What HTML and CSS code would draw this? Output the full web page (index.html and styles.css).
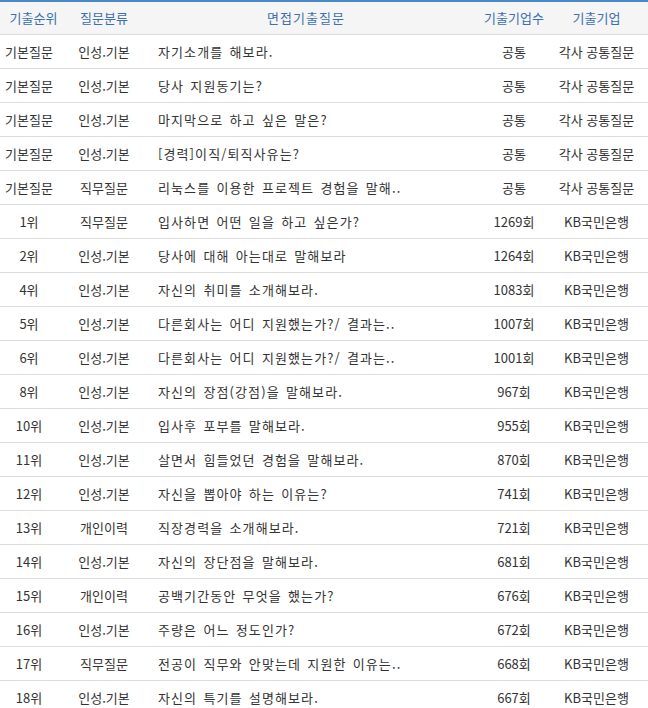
FILE: index.html
```html
<!DOCTYPE html>
<html lang="ko">
<head>
<meta charset="utf-8">
<link rel="stylesheet" href="styles.css">
</head>
<body>
<table class="qtable">
  <colgroup>
    <col class="c1"><col class="c2"><col class="c3"><col class="c4"><col class="c5">
  </colgroup>
  <thead>
    <tr><th>기출순위</th><th>질문분류</th><th class="qh">면접기출질문</th><th>기출기업수</th><th class="last">기출기업</th></tr>
  </thead>
  <tbody>
    <tr><td class="rank">기본질문</td><td>인성.기본</td><td class="q">자기소개를 해보라.</td><td>공통</td><td class="last">각사 공통질문</td></tr>
    <tr><td class="rank">기본질문</td><td>인성.기본</td><td class="q">당사 지원동기는?</td><td>공통</td><td class="last">각사 공통질문</td></tr>
    <tr><td class="rank">기본질문</td><td>인성.기본</td><td class="q">마지막으로 하고 싶은 말은?</td><td>공통</td><td class="last">각사 공통질문</td></tr>
    <tr><td class="rank">기본질문</td><td>인성.기본</td><td class="q">[경력]이직/퇴직사유는?</td><td>공통</td><td class="last">각사 공통질문</td></tr>
    <tr><td class="rank">기본질문</td><td>직무질문</td><td class="q">리눅스를 이용한 프로젝트 경험을 말해..</td><td>공통</td><td class="last">각사 공통질문</td></tr>
    <tr><td class="rank">1위</td><td>직무질문</td><td class="q">입사하면 어떤 일을 하고 싶은가?</td><td>1269회</td><td class="last">KB국민은행</td></tr>
    <tr><td class="rank">2위</td><td>인성.기본</td><td class="q">당사에 대해 아는대로 말해보라</td><td>1264회</td><td class="last">KB국민은행</td></tr>
    <tr><td class="rank">4위</td><td>인성.기본</td><td class="q">자신의 취미를 소개해보라.</td><td>1083회</td><td class="last">KB국민은행</td></tr>
    <tr><td class="rank">5위</td><td>인성.기본</td><td class="q">다른회사는 어디 지원했는가?/ 결과는..</td><td>1007회</td><td class="last">KB국민은행</td></tr>
    <tr><td class="rank">6위</td><td>인성.기본</td><td class="q">다른회사는 어디 지원했는가?/ 결과는..</td><td>1001회</td><td class="last">KB국민은행</td></tr>
    <tr><td class="rank">8위</td><td>인성.기본</td><td class="q">자신의 장점(강점)을 말해보라.</td><td>967회</td><td class="last">KB국민은행</td></tr>
    <tr><td class="rank">10위</td><td>인성.기본</td><td class="q">입사후 포부를 말해보라.</td><td>955회</td><td class="last">KB국민은행</td></tr>
    <tr><td class="rank">11위</td><td>인성.기본</td><td class="q">살면서 힘들었던 경험을 말해보라.</td><td>870회</td><td class="last">KB국민은행</td></tr>
    <tr><td class="rank">12위</td><td>인성.기본</td><td class="q">자신을 뽑아야 하는 이유는?</td><td>741회</td><td class="last">KB국민은행</td></tr>
    <tr><td class="rank">13위</td><td>개인이력</td><td class="q">직장경력을 소개해보라.</td><td>721회</td><td class="last">KB국민은행</td></tr>
    <tr><td class="rank">14위</td><td>인성.기본</td><td class="q">자신의 장단점을 말해보라.</td><td>681회</td><td class="last">KB국민은행</td></tr>
    <tr><td class="rank">15위</td><td>개인이력</td><td class="q">공백기간동안 무엇을 했는가?</td><td>676회</td><td class="last">KB국민은행</td></tr>
    <tr><td class="rank">16위</td><td>인성.기본</td><td class="q">주량은 어느 정도인가?</td><td>672회</td><td class="last">KB국민은행</td></tr>
    <tr><td class="rank">17위</td><td>직무질문</td><td class="q">전공이 직무와 안맞는데 지원한 이유는..</td><td>668회</td><td class="last">KB국민은행</td></tr>
    <tr><td class="rank">18위</td><td>인성.기본</td><td class="q">자신의 특기를 설명해보라.</td><td>667회</td><td class="last">KB국민은행</td></tr>
  </tbody>
</table>
</body>
</html>
```

FILE: styles.css
```css
html, body {
  margin: 0;
  padding: 0;
  background: #ffffff;
}
body {
  font-family: "Noto Sans CJK KR", "Noto Sans", sans-serif;
  font-size: 13px;
  color: #333333;
}
.qtable {
  width: 648px;
  border-collapse: collapse;
  table-layout: fixed;
  border-top: 2px solid #4a88c7;
}
.c1 { width: 67px; }
.c2 { width: 74px; }
.c3 { width: 330px; }
.c4 { width: 86px; }
.c5 { width: 91px; }
.qtable th {
  height: 32px;
  padding: 0;
  background: #f5f5f5;
  color: #3a70ad;
  font-weight: normal;
  text-align: center;
  border-bottom: 1px solid #dcdcdc;
  line-height: 18px;
}
.qtable th.qh {
  letter-spacing: 1px;
}
.qtable td {
  height: 33px;
  padding: 0;
  text-align: center;
  border-bottom: 1px solid #dcdcdc;
  line-height: 18px;
  white-space: nowrap;
}
.qtable td.rank {
  padding-right: 9px;
}
.qtable td.q {
  text-align: left;
  padding-left: 17px;
  letter-spacing: 1.1px;
  word-spacing: 1.5px;
}
.qtable .last {
  padding-right: 12px;
}
```
